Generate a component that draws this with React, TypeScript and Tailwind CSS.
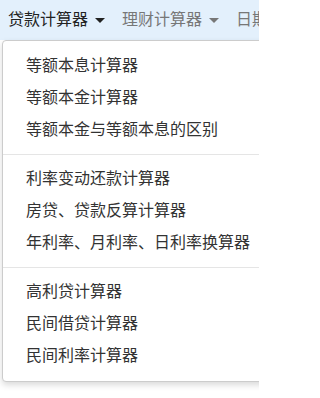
const groups = [
  ["等额本息计算器", "等额本金计算器", "等额本金与等额本息的区别"],
  ["利率变动还款计算器", "房贷、贷款反算计算器", "年利率、月利率、日利率换算器"],
  ["高利贷计算器", "民间借贷计算器", "民间利率计算器"],
];

function Caret({ className }: { className: string }) {
  return <span className={`ml-[7px] inline-block border-x-[5px] border-t-[5px] border-x-transparent ${className}`} />;
}

export default function App() {
  return (
    <div
      className="relative h-[398px] w-[259px] overflow-hidden bg-white text-[16px]"
      style={{ fontFamily: '"Liberation Sans", "Noto Sans CJK SC", sans-serif' }}
    >
      <nav className="flex h-[40px] items-center gap-[17px] whitespace-nowrap bg-[#e3f0fc] pl-[8px]">
        <span className="flex items-center text-[#222]">
          贷款计算器
          <Caret className="border-t-[#222]" />
        </span>
        <span className="flex items-center text-[#777]">
          理财计算器
          <Caret className="border-t-[#777]" />
        </span>
        <span className="text-[#777]">日期计算器</span>
      </nav>

      <div className="absolute left-[2px] top-[40px] w-[272px] rounded-[4px] border border-[#ccc] bg-white py-[9px] shadow-[0_3px_6px_rgba(0,0,0,0.15)]">
        {groups.map((items, gi) => (
          <div key={gi}>
            {gi > 0 && <div className="my-[8px] h-px bg-[#e5e5e5]" />}
            {items.map((label) => (
              <div key={label} className="h-[32px] whitespace-nowrap pl-[23px] leading-[32px] text-[#333]">
                {label}
              </div>
            ))}
          </div>
        ))}
      </div>
    </div>
  );
}
